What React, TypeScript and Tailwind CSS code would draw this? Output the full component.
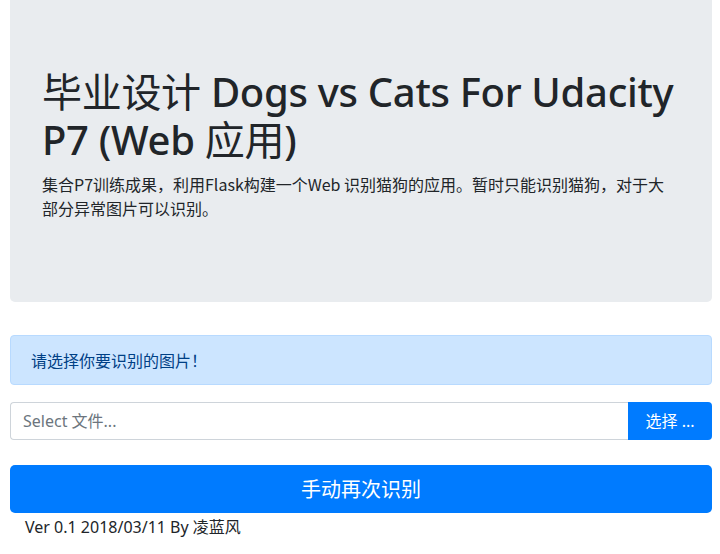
export default function App() {
  const font = { fontFamily: '"Noto Sans", "Noto Sans CJK SC", sans-serif' };
  const cjk = { fontFamily: '"Noto Sans CJK SC", sans-serif' };
  return (
    <div className="min-h-[554px] bg-white text-[#212529]" style={font}>
      <div className="ml-[10px] w-[702px] pb-4">
        <div className="rounded-b-[5px] bg-[#e9ecef] px-8 pt-[68px] pb-[66px] mb-[33px]">
          <h1 className="text-[40px] leading-[48px] font-medium mb-2 tracking-[-0.3px]">
            <span className="font-normal leading-none" style={cjk}>毕业设计</span> Dogs vs Cats For Udacity P7 (Web <span className="font-normal leading-none" style={cjk}>应用</span>)
          </h1>
          <p className="text-[16px] leading-6 mb-4" style={cjk}>
            集合P7训练成果，利用Flask构建一个Web 识别猫狗的应用。暂时只能识别猫狗，对于大部分异常图片可以识别。
          </p>
        </div>
        <div className="rounded border border-[#b8daff] bg-[#cce5ff] text-[#004085] px-5 py-3 text-[16px] leading-6 mb-[17px]" style={cjk}>
          请选择你要识别的图片！
        </div>
        <div className="flex h-[38px] mb-[25px]">
          <div className="flex-1 flex items-center rounded-l border border-[#ced4da] border-r-0 px-3 text-[16px] text-[#6c757d]">
            Select 文件...
          </div>
          <button className="w-[84px] rounded-r bg-[#007bff] text-white text-[16px] flex items-center justify-center">
            选择 ...
          </button>
        </div>
        <button className="w-full h-[48px] rounded-[5px] bg-[#007bff] text-white text-[20px] flex items-center justify-center" style={cjk}>
          手动再次识别
        </button>
        <div className="pl-[15px] text-[16px] leading-6 mt-[2px]">Ver 0.1 2018/03/11 By 凌蓝风</div>
      </div>
    </div>
  );
}
